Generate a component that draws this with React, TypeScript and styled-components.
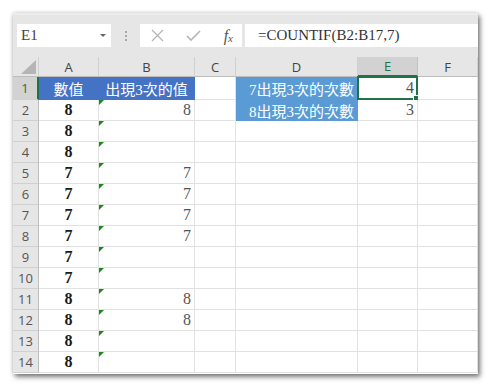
import React from "react";
import styled, { createGlobalStyle } from "styled-components";

const GlobalStyle = createGlobalStyle`
  html, body {
    margin: 0;
    padding: 0;
    background: #ffffff;
  }
`;

const cols = [
  { key: "A", width: 60 },
  { key: "B", width: 96 },
  { key: "C", width: 41 },
  { key: "D", width: 122 },
  { key: "E", width: 60 },
  { key: "F", width: 60 },
];

const colA = ["數值", "8", "8", "8", "7", "7", "7", "7", "7", "7", "8", "8", "8", "8"];
const colB = ["出現3次的值", "8", "", "", "7", "7", "7", "7", "", "", "8", "8", "", ""];

const App: React.FC = () => {
  return (
    <>
      <GlobalStyle />
      <Page>
        <Window>
          <FormulaBar>
            <NameBox>
              <NameText>E1</NameText>
              <Caret />
            </NameBox>
            <Dots>
              <i />
              <i />
              <i />
            </Dots>
            <FxBox>
              <svg width="13" height="13" viewBox="0 0 13 13">
                <path d="M1 1 L12 12 M12 1 L1 12" stroke="#b5b5b5" strokeWidth="1.3" fill="none" />
              </svg>
              <svg width="15" height="12" viewBox="0 0 15 12">
                <path d="M1 6 L5 10 L14 1" stroke="#b5b5b5" strokeWidth="1.6" fill="none" />
              </svg>
              <FxText>
                f<sub>x</sub>
              </FxText>
            </FxBox>
            <FormulaInput>=COUNTIF(B2:B17,7)</FormulaInput>
          </FormulaBar>
          <Sheet>
            <Row>
              <Corner>
                <CornerTri />
              </Corner>
              {cols.map((c) => (
                <ColHead key={c.key} width={c.width} active={c.key === "E"}>
                  {c.key}
                </ColHead>
              ))}
            </Row>
            {colA.map((a, i) => {
              const r = i + 1;
              const h = r === 1 ? 23 : 21;
              return (
                <Row key={r}>
                  <RowHead height={h} active={r === 1}>
                    {r}
                  </RowHead>
                  {r === 1 ? (
                    <Cell width={60} height={h} fill="#4472c4" align="center">
                      <HeadText>{a}</HeadText>
                    </Cell>
                  ) : (
                    <Cell width={60} height={h} align="center">
                      <BoldNum>{a}</BoldNum>
                    </Cell>
                  )}
                  {r === 1 ? (
                    <Cell width={96} height={h} fill="#4472c4" align="center">
                      <HeadText>{colB[i]}</HeadText>
                    </Cell>
                  ) : (
                    <Cell width={96} height={h} align="right">
                      <Flag />
                      <LightNum>{colB[i]}</LightNum>
                    </Cell>
                  )}
                  <Cell width={41} height={h} />
                  {r === 1 || r === 2 ? (
                    <Cell width={122} height={h} fill="#5b9bd5" align="right">
                      <HeadText>{r === 1 ? "7出現3次的次數" : "8出現3次的次數"}</HeadText>
                    </Cell>
                  ) : (
                    <Cell width={122} height={h} />
                  )}
                  <Cell width={60} height={h} align="right">
                    {r === 1 && (
                      <Selection>
                        <Handle />
                      </Selection>
                    )}
                    <LightNum>{r === 1 ? "4" : r === 2 ? "3" : ""}</LightNum>
                  </Cell>
                  <Cell width={60} height={h} />
                </Row>
              );
            })}
          </Sheet>
        </Window>
      </Page>
    </>
  );
};

export default App;

const Page = styled.div`
  width: 491px;
  height: 387px;
  padding: 13px 0 0 13px;
  box-sizing: border-box;
  overflow: hidden;
`;

const Window = styled.div`
  width: 465px;
  height: 361px;
  background: #ffffff;
  overflow: hidden;
  border-top: 2px solid #ececec;
  box-sizing: border-box;
  box-shadow: 2px 3px 5px rgba(0, 0, 0, 0.5), 0 0 4px rgba(0, 0, 0, 0.18);
`;

const FormulaBar = styled.div`
  height: 42px;
  background: #e6e6e6;
  display: flex;
  align-items: flex-start;
  padding-top: 9px;
  box-sizing: border-box;
`;

const NameBox = styled.div`
  margin-left: 4px;
  width: 94px;
  height: 23px;
  background: #ffffff;
  display: flex;
  align-items: center;
  justify-content: space-between;
  padding: 0 5px 0 4px;
  box-sizing: border-box;
`;

const NameText = styled.span`
  font-family: "Liberation Serif", serif;
  font-size: 15px;
  color: #444;
`;

const Caret = styled.span`
  width: 0;
  height: 0;
  border-left: 3px solid transparent;
  border-right: 3px solid transparent;
  border-top: 3px solid #666;
`;

const Dots = styled.div`
  width: 29px;
  height: 23px;
  display: flex;
  flex-direction: column;
  align-items: center;
  justify-content: center;
  gap: 2px;
  i {
    width: 2px;
    height: 2px;
    background: #a8a8a8;
  }
`;

const FxBox = styled.div`
  width: 102px;
  height: 23px;
  background: #ffffff;
  display: flex;
  align-items: center;
  justify-content: space-between;
  padding: 0 9px 0 11px;
  box-sizing: border-box;
`;

const FxText = styled.span`
  font-family: "Liberation Serif", serif;
  font-style: italic;
  font-size: 16px;
  color: #555;
  sub {
    font-size: 11px;
    vertical-align: -1px;
  }
`;

const FormulaInput = styled.div`
  margin-left: 3px;
  flex: 1;
  height: 23px;
  background: #ffffff;
  padding-left: 13px;
  font-family: "Liberation Serif", serif;
  font-size: 15px;
  line-height: 23px;
  color: #333;
`;

const Sheet = styled.div`
  display: flex;
  flex-direction: column;
`;

const Row = styled.div`
  display: flex;
`;

const Corner = styled.div`
  width: 26px;
  height: 20px;
  background: #e6e6e6;
  border-right: 1px solid #d0d0d0;
  border-bottom: 1px solid #bdbdbd;
  box-sizing: border-box;
  position: relative;
`;

const CornerTri = styled.div`
  position: absolute;
  right: 2px;
  bottom: 2px;
  width: 0;
  height: 0;
  border-left: 15px solid transparent;
  border-bottom: 14px solid #b5b5b5;
`;

const ColHead = styled.div<{ width: number; active?: boolean }>`
  width: ${(p) => p.width}px;
  height: 20px;
  box-sizing: border-box;
  background: ${(p) => (p.active ? "#d2d2d2" : "#e6e6e6")};
  border-right: 1px solid ${(p) => (p.active ? "#c2c2c2" : "#d0d0d0")};
  border-bottom: ${(p) => (p.active ? "2px solid #217346" : "1px solid #bdbdbd")};
  display: flex;
  align-items: center;
  justify-content: center;
  font-family: "Open Sans", "Liberation Sans", sans-serif;
  font-size: 13px;
  color: ${(p) => (p.active ? "#217346" : "#444")};
`;

const RowHead = styled.div<{ height: number; active?: boolean }>`
  width: 26px;
  height: ${(p) => p.height}px;
  box-sizing: border-box;
  background: ${(p) => (p.active ? "#d2d2d2" : "#e6e6e6")};
  border-right: ${(p) => (p.active ? "2px solid #217346" : "1px solid #bdbdbd")};
  border-bottom: 1px solid #d0d0d0;
  display: flex;
  align-items: center;
  justify-content: center;
  font-family: "Open Sans", "Liberation Sans", sans-serif;
  font-size: 13px;
  color: ${(p) => (p.active ? "#217346" : "#555")};
`;

const Cell = styled.div<{ width: number; height: number; fill?: string; align?: string }>`
  position: relative;
  width: ${(p) => p.width}px;
  height: ${(p) => p.height}px;
  box-sizing: border-box;
  background: ${(p) => p.fill || "#ffffff"};
  border-right: 1px solid ${(p) => (p.fill ? p.fill : "#e1e1e1")};
  border-bottom: 1px solid ${(p) => (p.fill ? p.fill : "#e1e1e1")};
  display: flex;
  align-items: center;
  justify-content: ${(p) => (p.align === "right" ? "flex-end" : p.align === "center" ? "center" : "flex-start")};
  padding: 0 3px;
  white-space: nowrap;
`;

const HeadText = styled.span`
  font-family: "Liberation Serif", "Noto Sans CJK TC", serif;
  font-size: 15px;
  color: #ffffff;
`;

const BoldNum = styled.span`
  font-family: "Liberation Serif", serif;
  font-size: 16px;
  font-weight: 700;
  color: #1a1a1a;
`;

const LightNum = styled.span`
  font-family: "Liberation Serif", serif;
  font-size: 16px;
  color: #555;
`;

const Flag = styled.span`
  position: absolute;
  left: 0;
  top: 0;
  width: 0;
  height: 0;
  border-top: 5px solid #178a17;
  border-right: 5px solid transparent;
`;

const Selection = styled.div`
  position: absolute;
  left: -1px;
  top: -1px;
  right: -1px;
  bottom: -1px;
  border: 2px solid #217346;
  pointer-events: none;
`;

const Handle = styled.span`
  position: absolute;
  right: -4px;
  bottom: -4px;
  width: 5px;
  height: 5px;
  background: #217346;
  border: 1px solid #ffffff;
`;
